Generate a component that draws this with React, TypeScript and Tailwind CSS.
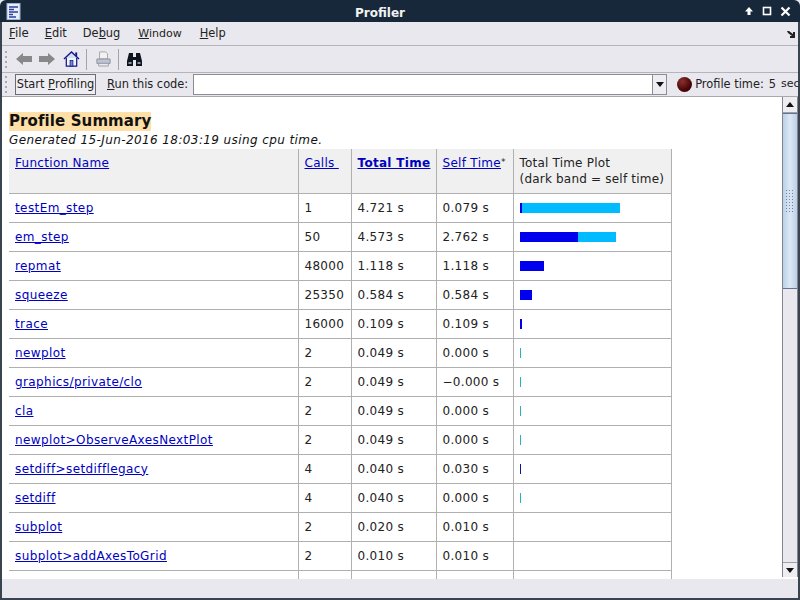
import React from "react";

const rows: [string, string, string, string, number, number][] = [
  ["testEm_step", "1", "4.721 s", "0.079 s", 2, 98],
  ["em_step", "50", "4.573 s", "2.762 s", 58, 38],
  ["repmat", "48000", "1.118 s", "1.118 s", 24, 0],
  ["squeeze", "25350", "0.584 s", "0.584 s", 12, 0],
  ["trace", "16000", "0.109 s", "0.109 s", 2, 0],
  ["newplot", "2", "0.049 s", "0.000 s", 0, 1],
  ["graphics/private/clo", "2", "0.049 s", "-0.000 s", 0, 1],
  ["cla", "2", "0.049 s", "0.000 s", 0, 1],
  ["newplot>ObserveAxesNextPlot", "2", "0.049 s", "0.000 s", 0, 1],
  ["setdiff>setdifflegacy", "4", "0.040 s", "0.030 s", 1, 0],
  ["setdiff", "4", "0.040 s", "0.000 s", 0, 1],
  ["subplot", "2", "0.020 s", "0.010 s", 0, 0],
  ["subplot>addAxesToGrid", "2", "0.010 s", "0.010 s", 0, 0],
  ["", "", "", "", 0, 0],
];

const Under = ({ c }: { c: string }) => <span className="underline">{c}</span>;

function Grip() {
  return (
    <div className="flex h-full w-[3px] shrink-0 flex-col justify-center gap-[3px]">
      <div className="h-[2px] w-[2px] bg-[#a9a9b0]" />
      <div className="h-[2px] w-[2px] bg-[#a9a9b0]" />
      <div className="h-[2px] w-[2px] bg-[#a9a9b0]" />
      <div className="h-[2px] w-[2px] bg-[#a9a9b0]" />
    </div>
  );
}

function Sep() {
  return <div className="h-[21px] w-[1px] bg-[#a4a4aa]" />;
}

export default function App() {
  return (
    <div className="flex h-[600px] w-[800px] flex-col overflow-hidden bg-[#e8e8ee] font-['DejaVu_Sans',sans-serif] text-[11.4px] text-[#222]">
      <div className="relative flex h-[22px] shrink-0 items-center rounded-t-[6px] bg-[#17283a] pl-[6px] pr-[9px]">
        <svg width="15" height="17" viewBox="0 0 15 17" className="mt-[1px]">
          <rect x="1" y="0.5" width="13" height="16" fill="#e8eef8" stroke="#9fb3cf" />
          <path d="M3 4h9M3 6.5h5M3 9h9M3 11.5h4M3 14h7" stroke="#2b3f9e" strokeWidth="1.6" />
        </svg>
        <div className="absolute left-0 right-[40px] top-[4px] text-center text-[12px] font-bold text-[#f2f2f2]">Profiler</div>
        <div className="ml-auto flex items-center gap-[8px]">
          <svg width="10" height="10" viewBox="0 0 10 10"><path d="M5 1 9 5.5H6.5V9h-3V5.5H1z" fill="#fff" /></svg>
          <svg width="10" height="10" viewBox="0 0 10 10"><rect x="1.5" y="1.5" width="7" height="7" fill="none" stroke="#fff" strokeWidth="1.6" /></svg>
          <svg width="11" height="11" viewBox="0 0 11 11"><path d="M1.5 1.5 9.5 9.5M9.5 1.5 1.5 9.5" stroke="#fff" strokeWidth="2.2" /></svg>
        </div>
      </div>

      <div className="flex min-h-0 flex-1 flex-col border-x-2 border-b-2 border-x-[#3a4450] border-b-[#3a4450]">
        <div className="relative flex h-[24px] shrink-0 items-center gap-[16px] border-b border-[#b4b4ba] pl-[7px] pt-[1px]">
          <span className="text-[11.8px]"><Under c="F" />ile</span>
          <span>
            <Under c="E" />dit
          </span>
          <span>De<Under c="b" />ug</span>
          <span className="ml-[2px] text-[11px]"><Under c="W" />indow</span>
          <span className="ml-[2px]"><Under c="H" />elp</span>
          <svg width="8" height="8" viewBox="0 0 8 8" className="absolute right-[3px] top-[8px]"><path d="M0 1h2l4 3V2h2v6H3V6h2L1 3z" fill="#222" /></svg>
        </div>

        <div className="flex h-[27px] shrink-0 items-center border-b border-[#b4b4ba] pl-[3px]">
          <Grip />
          <svg width="16" height="14" viewBox="0 0 16 14" className="ml-[8px]"><path d="M0 7 7 1v3h9v6H7v3z" fill="#888" /></svg>
          <svg width="16" height="14" viewBox="0 0 16 14" className="ml-[7px]"><path d="M16 7 9 1v3H0v6h9v3z" fill="#888" /></svg>
          <svg width="17" height="18" viewBox="0 0 18 18" className="ml-[8px]">
            <path d="M1 9 9 1.5 17 9" fill="#cfe0f4" stroke="#16168a" strokeWidth="1.4" />
            <path d="M3.5 8v8.5h11V8" fill="#f4f4f4" stroke="#16168a" strokeWidth="1.3" />
            <rect x="7.5" y="10.5" width="3" height="6" fill="#6a8fd0" stroke="#16168a" strokeWidth="0.8" />
            <rect x="13" y="2" width="2" height="4" fill="#16168a" />
          </svg>
          <div className="ml-[6px]"><Sep /></div>
          <svg width="15" height="18" viewBox="0 0 17 18" className="ml-[9px]">
            <path d="M4 1h7l2 2v6H4z" fill="#f2f2f2" stroke="#a0a0a0" />
            <path d="M1 9h15v5H1z" fill="#b9c4d4" stroke="#8c8c94" />
            <path d="M3 14h11v3H3z" fill="#e8e8ee" stroke="#9a9aa2" />
          </svg>
          <div className="ml-[7px]"><Sep /></div>
          <svg width="17" height="15" viewBox="0 0 17 15" className="ml-[7px]">
            <path d="M3 1h4v4h3V1h4l2 8v5h-6V8H7v6H1V9z" fill="#10141c" />
            <rect x="2.5" y="10" width="3" height="2" fill="#8a94a8" />
            <rect x="11.5" y="10" width="3" height="2" fill="#8a94a8" />
          </svg>
        </div>

        <div className="flex h-[23px] shrink-0 items-center overflow-hidden pl-[3px]">
          <Grip />
          <div className="ml-[7px] flex h-[21px] w-[81px] shrink-0 items-center justify-center border border-[#6c6c74] bg-[#eeeef2] whitespace-nowrap">
            Start&nbsp;<Under c="P" />rofiling
          </div>
          <span className="ml-[11px] shrink-0 whitespace-nowrap"><Under c="R" />un this code:</span>
          <div className="ml-[5px] flex h-[21px] w-[474px] shrink-0 justify-end border border-[#8c8c94] bg-white">
            <div className="flex w-[14px] items-center justify-center border-l border-[#8c8c94] bg-[#eeeef2]">
              <svg width="8" height="5" viewBox="0 0 8 5"><path d="M0 0h8L4 5z" fill="#111" /></svg>
            </div>
          </div>
          <div className="ml-[10px] h-[15px] w-[15px] shrink-0 rounded-full bg-[radial-gradient(circle_at_35%_30%,#8a3030,#4a0606_60%,#2c0000)]" />
          <span className="ml-[3px] shrink-0 whitespace-nowrap">Profile time:</span>
          <span className="ml-[5px] shrink-0">5</span>
          <span className="ml-[5px] shrink-0 text-[11px]">sec</span>
        </div>

        <div className="flex h-[483px] shrink-0 items-stretch border-t border-[#a8a8ae] bg-white">
          <div className="min-w-0 flex-1 overflow-hidden pl-[7px] pt-[15px]">
            <div className="text-[15px] leading-[19px] font-bold tracking-[0.1px] text-[#111]"><span className="inline-block bg-[#ffdfa8]">Profile Summary</span></div>
            <div className="mt-[2px] text-[12px] leading-[15px] italic tracking-[0.4px] text-[#111]">Generated 15-Jun-2016 18:03:19 using cpu time.</div>
            <table className="mt-[1px] w-[662px] table-fixed border-collapse text-[12px] tracking-[0.3px]">
              <colgroup>
                <col className="w-[289px]" />
                <col className="w-[53px]" />
                <col className="w-[85px]" />
                <col className="w-[77px]" />
                <col className="w-[158px]" />
              </colgroup>
              <thead>
                <tr className="h-[44px] bg-[#f0f0f0] align-top">
                  <th className="border-r border-b border-[#b0b0b0] pl-[6px] pt-[5px] text-left font-normal"><a className="text-[#0000c0] underline">Function Name</a></th>
                  <th className="border-x border-b border-[#b0b0b0] pl-[6px] pt-[5px] text-left font-normal"><a className="text-[#0000c0] underline">Calls&nbsp;</a></th>
                  <th className="border-x border-b border-[#b0b0b0] pl-[6px] pt-[5px] text-left font-bold"><a className="text-[#0000c0] underline">Total Time</a></th>
                  <th className="border-x border-b border-[#b0b0b0] pl-[6px] pt-[5px] text-left font-normal whitespace-nowrap"><a className="text-[#0000c0] underline">Self Time</a><span className="align-[2px] text-[9px] leading-none">*</span></th>
                  <th className="border-x border-b border-[#b0b0b0] pl-[6px] pt-[6px] text-left leading-[16px] font-normal tracking-[0.2px] whitespace-nowrap">Total Time Plot<br />(dark band = self time)</th>
                </tr>
              </thead>
              <tbody>
                {rows.map((r, i) => (
                  <tr key={i} className="h-[29px]">
                    <td className="border-r border-b border-[#b0b0b0] pl-[6px] tracking-[0.4px] whitespace-nowrap"><a className="text-[#0000c0] underline">{r[0]}</a></td>
                    <td className="border-x border-b border-[#b0b0b0] pl-[6px]">{r[1]}</td>
                    <td className="border-x border-b border-[#b0b0b0] pl-[6px]">{r[2]}</td>
                    <td className="border-x border-b border-[#b0b0b0] pl-[6px]">{r[3].replace("-", "\u2212")}</td>
                    <td className="border-x border-b border-[#b0b0b0] pl-[6px]">
                      <div className="flex h-[10px]">
                        {r[4] > 0 && <div className={r[4] === 1 ? "h-full bg-[#10109c]" : "h-full bg-[#0000ee]"} style={{ width: r[4] }} />}
                        {r[5] > 0 && <div className={r[5] === 1 ? "h-full bg-[#28b0c4]" : "h-full bg-[#00bbff]"} style={{ width: r[5] }} />}
                      </div>
                    </td>
                  </tr>
                ))}
              </tbody>
            </table>
          </div>
          <div className="mb-[2px] flex w-[16px] shrink-0 flex-col border-x border-[#85858c] bg-[#e8e8ee]">
            <div className="flex h-[16px] shrink-0 items-center justify-center border-b border-[#a0a0a8] bg-[#eeeef2]">
              <svg width="8" height="5" viewBox="0 0 8 5"><path d="M0 5h8L4 0z" fill="#111" /></svg>
            </div>
            <div className="flex h-[176px] shrink-0 items-center justify-center border-y border-[#5f7496] bg-gradient-to-r from-[#bcd0e8] via-[#dce8f5] to-[#bcd0e8]">
              <div className="h-[24px] w-[10px] bg-[radial-gradient(circle,#6f84a4_1px,transparent_1px)] bg-[length:3px_3px]" />
            </div>
            <div className="flex-1" />
            <div className="flex h-[15px] shrink-0 items-center justify-center border-t border-[#a0a0a8] bg-[#eeeef2]">
              <svg width="8" height="5" viewBox="0 0 8 5"><path d="M0 0h8L4 5z" fill="#111" /></svg>
            </div>
          </div>
        </div>
        <div className="flex-1 bg-[#e8e8ee]" />
      </div>
    </div>
  );
}
